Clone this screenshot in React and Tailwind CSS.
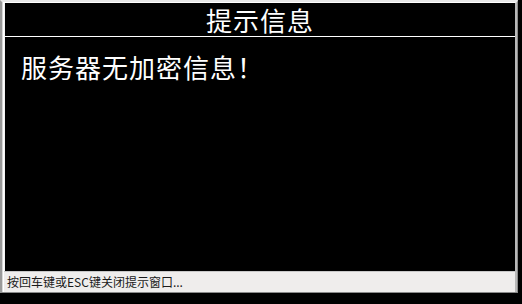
export default function App() {
  const cjk = { fontFamily: '"Noto Sans CJK SC", "Noto Sans", sans-serif' };
  return (
    <div className="w-[522px] h-[304px] bg-black overflow-hidden" style={cjk}>
      <div className="w-[518px] h-[293px] flex flex-col bg-[#d8d8d8] border-l-2 border-t-2 border-r border-b border-l-[#9a9a9a] border-t-[#e8e8e8] border-r-[#8a8a8a] border-b-[#8a8a8a]">
        {/* Inner frame */}
        <div className="flex-1 flex flex-col border-l border-t border-r-2 border-[#ffffff] border-r-[#b8b8b8] ml-[1px]">
          <div className="flex-1 flex flex-col border-l border-[#f4f4f4] bg-black">
            {/* Title */}
            <div className="h-[34px] flex items-center justify-center border-b border-white">
              <span className="text-white text-[26px] leading-none tracking-[1px]">提示信息</span>
            </div>
            {/* Content */}
            <div className="flex-1 px-[16px] pt-[17px]">
              <p className="text-white text-[26px] leading-none tracking-[1px]">服务器无加密信息！</p>
            </div>
          </div>
          {/* Status bar */}
          <div className="h-[21px] flex items-center px-[3px] bg-[#efedec] border-t border-[#c8c8c8]">
            <span className="text-[#1a1a1a] text-[12px] leading-none">按回车键或ESC键关闭提示窗口...</span>
          </div>
        </div>
      </div>
    </div>
  );
}
